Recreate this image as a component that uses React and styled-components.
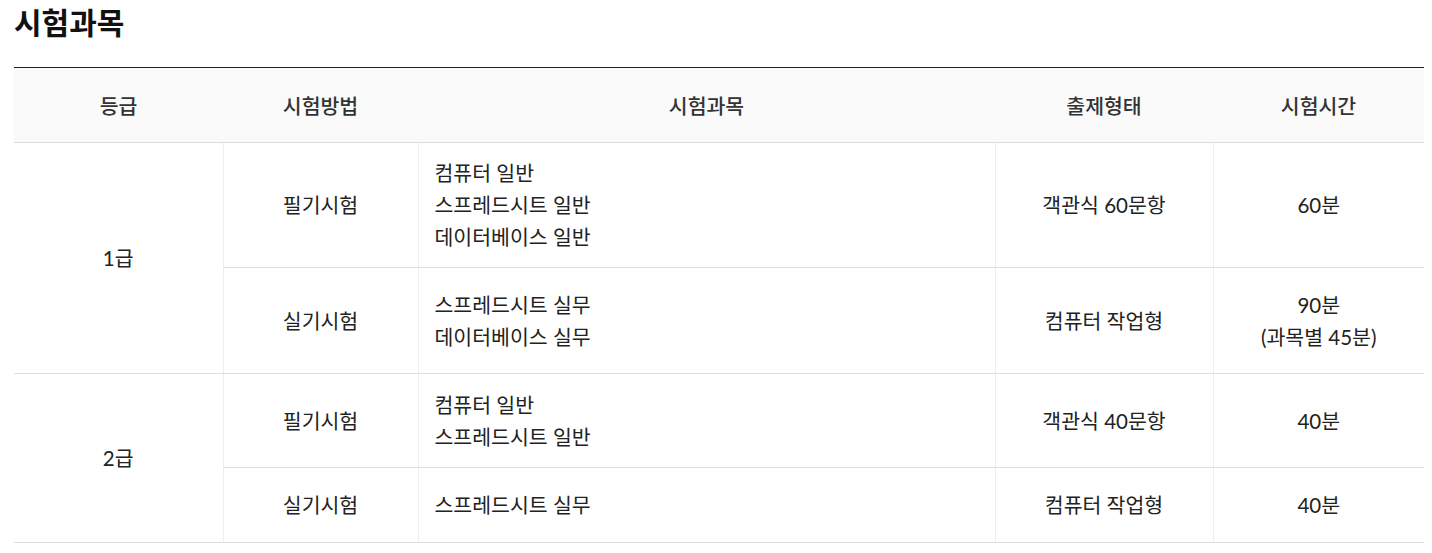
import React from "react";
import styled, { createGlobalStyle } from "styled-components";

const Global = createGlobalStyle`
  html, body { margin: 0; padding: 0; background: #fff; }
  body {
    font-family: Lato, "Noto Sans CJK KR", sans-serif;
    color: #222;
  }
`;

const Page = styled.section`
  padding: 2px 8px 0 14px;
`;

const Title = styled.h2`
  margin: 0 0 24px;
  font-size: 30px;
  line-height: 41px;
  font-weight: 700;
  color: #111;
`;

const Table = styled.table`
  width: 100%;
  border-collapse: collapse;
  table-layout: fixed;
  border-top: 1px solid #222;
`;

const Head = styled.th`
  height: 74px;
  padding: 0;
  background: #fafafa;
  border-bottom: 1px solid #ddd;
  font-size: 20.5px;
  font-weight: 500;
  color: #333;
  text-align: center;
  vertical-align: middle;
`;

const Row = styled.tr`
  height: ${(p) => p.$h}px;
`;

const Cell = styled.td`
  padding: 0 16px;
  font-size: 20.5px;
  line-height: 32px;
  color: #222;
  text-align: ${(p) => (p.$left ? "left" : "center")};
  vertical-align: middle;
  border-bottom: 1px solid #ddd;
  border-left: ${(p) => (p.$first ? "none" : "1px solid #eee")};
`;

const Line = styled.span`
  display: block;
`;

const rows = [
  {
    grade: "1급",
    items: [
      { h: 125, method: "필기시험", subjects: ["컴퓨터 일반", "스프레드시트 일반", "데이터베이스 일반"], type: "객관식 60문항", time: ["60분"] },
      { h: 106, method: "실기시험", subjects: ["스프레드시트 실무", "데이터베이스 실무"], type: "컴퓨터 작업형", time: ["90분", "(과목별 45분)"] },
    ],
  },
  {
    grade: "2급",
    items: [
      { h: 94, method: "필기시험", subjects: ["컴퓨터 일반", "스프레드시트 일반"], type: "객관식 40문항", time: ["40분"] },
      { h: 75, method: "실기시험", subjects: ["스프레드시트 실무"], type: "컴퓨터 작업형", time: ["40분"] },
    ],
  },
];

export default function App() {
  return (
    <Page>
      <Global />
      <Title>시험과목</Title>
      <Table>
        <colgroup>
          <col style={{ width: 209 }} />
          <col style={{ width: 195 }} />
          <col style={{ width: 577 }} />
          <col style={{ width: 218 }} />
          <col />
        </colgroup>
        <thead>
          <tr>
            <Head>등급</Head>
            <Head>시험방법</Head>
            <Head>시험과목</Head>
            <Head>출제형태</Head>
            <Head>시험시간</Head>
          </tr>
        </thead>
        <tbody>
          {rows.map((g) =>
            g.items.map((it, i) => (
              <Row key={g.grade + i} $h={it.h}>
                {i === 0 && (
                  <Cell $first rowSpan={g.items.length}>
                    {g.grade}
                  </Cell>
                )}
                <Cell>{it.method}</Cell>
                <Cell $left>
                  {it.subjects.map((s) => (
                    <Line key={s}>{s}</Line>
                  ))}
                </Cell>
                <Cell>{it.type}</Cell>
                <Cell>
                  {it.time.map((t) => (
                    <Line key={t}>{t}</Line>
                  ))}
                </Cell>
              </Row>
            ))
          )}
        </tbody>
      </Table>
    </Page>
  );
}
